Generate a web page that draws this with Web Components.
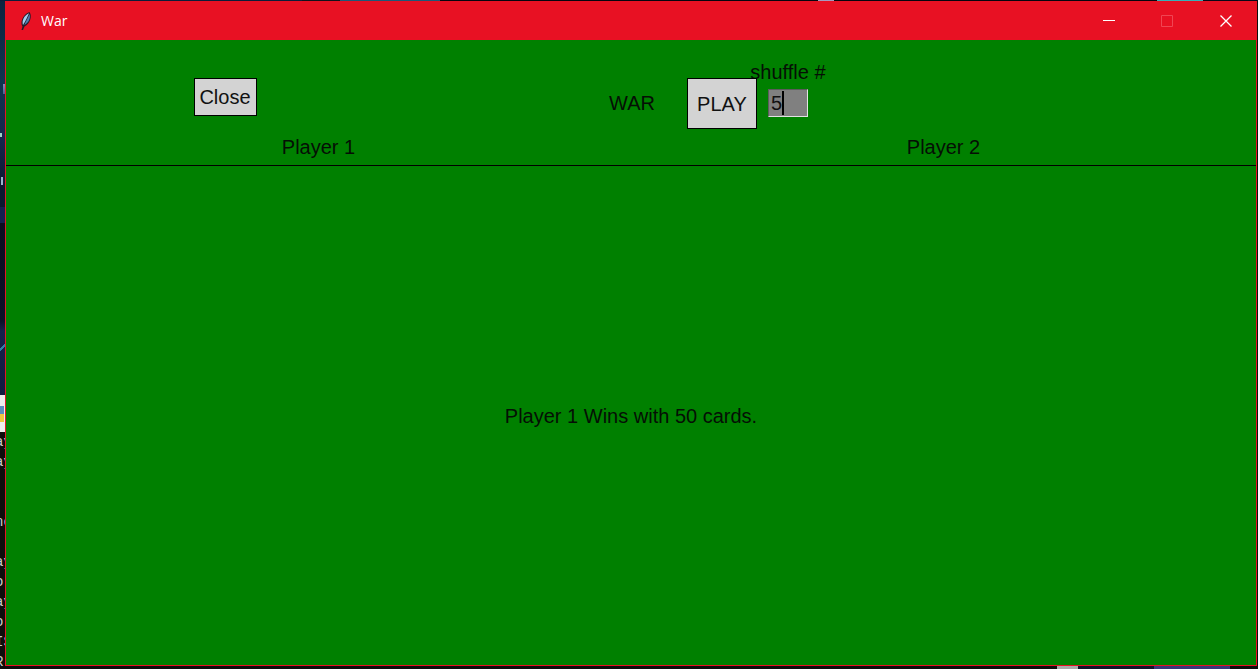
<!DOCTYPE html>
<html lang="en">
<head>
<meta charset="utf-8">
<title>War</title>
<style>
html, body { margin: 0; height: 100%; }
body { font-family: "Liberation Sans", Arial, sans-serif; overflow: hidden; }
</style>
</head>
<body>
<war-desktop>
  <console-peek slot="behind"></console-peek>
  <war-window heading="War">
    <war-table></war-table>
  </war-window>
</war-desktop>
<script>
const define = (name, html, setup) => customElements.define(name, class extends HTMLElement {
  constructor() {
    super();
    this.attachShadow({ mode: "open" }).innerHTML = html;
  }
  connectedCallback() { if (setup) setup(this, this.shadowRoot); }
});

define("war-desktop", `
<style>
  :host { display: grid; box-sizing: border-box; height: 100vh; grid-template-columns: 5px 1fr; padding: 1px 1px 3px 0;
    background:
      linear-gradient(90deg, transparent 84%, #aaa 84% 85.7%, #10122a 85.7% 91.7%, #3a3678 91.7% 97.8%, transparent 97.8%) bottom / 100% 3px no-repeat,
      linear-gradient(90deg, #0b1d3a 0 24%, #10121c 24% 27%, #1c5878 27% 35%, #05050f 35% 65%, #a59ac0 65% 66.3%, #05050f 66.3% 92%, #38b0b8 92% 95.6%, #080818 95.6%) top / 100% 1px no-repeat,
      #0c0c0c; }
</style>
<slot name="behind"></slot><slot></slot>`);

define("console-peek", `
<style>
  :host { display: flex; flex-direction: column; overflow: hidden; min-height: 0; }
  .wall { flex: none; height: 394px;
    background:
      linear-gradient(135deg, transparent 46%, #2e7fa8 46% 60%, transparent 60%) 0 338px / 5px 16px no-repeat,
      linear-gradient(#7d8fb8, #4d6090) 3px 83px / 2px 10px no-repeat,
      linear-gradient(#9ad0c8, #9ad0c8) 0 132px / 2px 4px no-repeat,
      linear-gradient(#9ab4d0, #9ab4d0) 1px 176px / 2px 8px no-repeat,
      linear-gradient(#0c2440 0, #0e3450 80px, #14254c 140px, #0a1730 188px, #0a1730 206px, #131f50 206px, #131f50 222px, #090c20 222px, #0a0f28 320px, #14204c 330px, #101a40 394px); }
  .tile { flex: none; height: 37px; background:
      linear-gradient(#5b8fc0, #5b8fc0) 0 11px / 4px 8px no-repeat,
      linear-gradient(#f0c840, #f0c840) 0 19px / 4px 8px no-repeat, #eee; }
  pre { flex: 1; min-height: 0; margin: 0; overflow: hidden; color: #ccc; font: 14px/20px "Liberation Mono", monospace; }
  pre span { display: block; height: 20px; text-indent: -5px; }
</style>
<div class="wall"></div><div class="tile"></div>
<pre><span>ay</span><span>ay</span><span></span><span></span><span>ne</span><span></span><span>ay</span><span>o'</span><span>ay</span><span>o'</span><span>IS</span><span>R</span></pre>`);

define("war-window", `
<style>
  :host { display: flex; flex-direction: column; min-width: 0; border: 1px solid #e81123; background: #008000; }
  header { flex: none; display: flex; align-items: center; height: 38px; background: #e81123; color: #fff; }
  .feather { width: 16px; height: 20px; margin: 0 7px 0 12px; }
  h1 { flex: 1; margin: 0; font: 400 14px/20px "Open Sans", "Noto Sans", sans-serif; }
  button { display: grid; place-items: center; width: 58px; height: 38px; padding: 0; border: 0; background: none; color: inherit; }
  button svg { width: 12px; height: 12px; }
  button:disabled { color: #f04553; }
  .close { width: 60px; }
  ::slotted(*) { flex: 1; }
</style>
<header>
  <svg class="feather" viewBox="0 0 16 20" aria-hidden="true">
    <path d="M3.500 19 L4.500 15.500 C2 12 4 4 11.500 1 C14.500 5 12 13 6.500 15.500 L5 19Z" fill="#241c2a"/>
    <path d="M5 14 C3.500 10 6 4.500 11 2.300 C9.500 6 7.500 10 5 14Z" fill="#a3cdec"/>
    <path d="M6.300 14 C8 10 10.200 6 11.500 3 C12.800 7 11 11.500 6.300 14Z" fill="#4f7fb5"/>
  </svg>
  <h1></h1>
  <button type="button" aria-label="Minimize"><svg viewBox="0 0 12 12"><path d="M0 5.500H12" stroke="currentColor"/></svg></button>
  <button type="button" aria-label="Maximize" disabled><svg viewBox="0 0 12 12"><path d="M.5 .5H11.500V11.500H.5Z" fill="none" stroke="currentColor"/></svg></button>
  <button type="button" class="close" aria-label="Close window"><svg viewBox="0 0 12 12"><path d="M.5 .5L11.500 11.500M11.500 .5L.5 11.500" stroke="currentColor" stroke-width="1.300"/></svg></button>
</header>
<slot></slot>`, (host, root) => { root.querySelector("h1").textContent = host.getAttribute("heading"); });

define("table-button", `
<style>
  :host { display: block; position: relative; z-index: 1; }
  button { display: block; width: 100%; height: 100%; padding: 0; border: 1px solid #000; background: #d3d3d3; color: #111; font: 20px/24px "Liberation Sans", Arial, sans-serif; }
</style>
<button type="button"><slot></slot></button>`);

define("shuffle-field", `
<style>
  :host { display: flex; flex-direction: column; align-items: center; width: 40px; }
  label { line-height: 24px; white-space: nowrap; }
  .box { display: flex; align-items: center; box-sizing: border-box; width: 40px; height: 28px; margin-top: 5px; border: 1px solid; border-color: #5c5c5c #e3e3e3 #e3e3e3 #5c5c5c; background: #808080; }
  input { box-sizing: border-box; width: 15px; height: 24px; padding: 0 0 0 2px; border: 0; border-right: 2px solid #000; outline: 0; background: none; color: #111; font: 20px/24px "Liberation Sans", Arial, sans-serif; }
</style>
<label for="count">shuffle #</label>
<div class="box"><input id="count" type="text" inputmode="numeric" value="5"></div>`);

define("war-table", `
<style>
  :host { display: flex; flex-direction: column; background: #008000; color: #050f05; font-size: 20px; line-height: 24px; }
  .bar { display: grid; grid-template-columns: 15% 33% 1fr; height: 95px; align-items: start; }
  .close { grid-column: 2; width: 63px; height: 38px; margin-top: 38px; }
  .deal { display: flex; padding: 20px 0 0 3px; }
  .name { margin-top: 31px; }
  .play { width: 70px; height: 51px; margin: 18px 11px 0 32px; }
  .players { display: grid; grid-template-columns: 1fr 1fr; height: 30px; border-bottom: 1px solid #000; text-align: center; }
  .result { flex: 1; display: grid; place-items: center; margin: 0; text-align: center; }
</style>
<div class="bar">
  <table-button class="close">Close</table-button>
  <div class="deal">
    <span class="name">WAR</span>
    <table-button class="play">PLAY</table-button>
    <shuffle-field></shuffle-field>
  </div>
</div>
<div class="players"><span>Player 1</span><span>Player 2</span></div>
<p class="result">Player 1 Wins with 50 cards.</p>`);
</script>
</body>
</html>
